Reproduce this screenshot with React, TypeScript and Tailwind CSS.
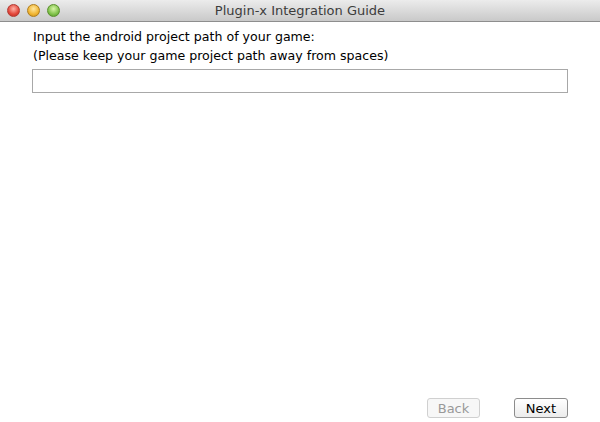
export default function App() {
  return (
    <div className="flex h-[422px] w-[600px] flex-col overflow-hidden bg-white font-['DejaVu_Sans',sans-serif] text-[12.6px] text-black">
      <div className="relative flex h-[22px] shrink-0 items-center justify-center border-b border-[#8e8e8e] bg-gradient-to-b from-[#ececec] to-[#c9c9c9]">
        <div className="absolute left-[7px] top-[4px] flex gap-[7px]">
          <span className="h-[13px] w-[13px] rounded-full border border-[#b23a33] bg-[radial-gradient(circle_at_50%_35%,#ffb3a8,#e2463a_60%,#b92f24)]" />
          <span className="h-[13px] w-[13px] rounded-full border border-[#b07d1c] bg-[radial-gradient(circle_at_50%_35%,#ffe8a0,#f0b532_60%,#c58b16)]" />
          <span className="h-[13px] w-[13px] rounded-full border border-[#5a8f2c] bg-[radial-gradient(circle_at_50%_35%,#d8f5a8,#80c24a_60%,#4f9325)]" />
        </div>
        <span className="text-[13px] text-[#3c3c3c]">Plugin-x Integration Guide</span>
      </div>
      <div className="flex flex-1 flex-col px-[32px]">
        <p className="mt-[5px] pl-[1px] leading-[19px]">Input the android project path of your game:</p>
        <p className="pl-[1px] leading-[19px]">(Please keep your game project path away from spaces)</p>
        <input className="mt-[4px] h-[24px] w-[536px] border border-[#a8a8a8] bg-white outline-none" />
        <div className="mt-auto mb-[4px] flex justify-end gap-[34px]">
          <button className="h-[20px] w-[53px] rounded-[3px] border border-[#d0d0d0] bg-[#f7f7f7] text-[13px] text-[#999]">Back</button>
          <button className="h-[20px] w-[54px] rounded-[3px] border border-[#8c8c8c] bg-gradient-to-b from-white to-[#ececec] text-[13px] text-black">Next</button>
        </div>
      </div>
    </div>
  );
}
